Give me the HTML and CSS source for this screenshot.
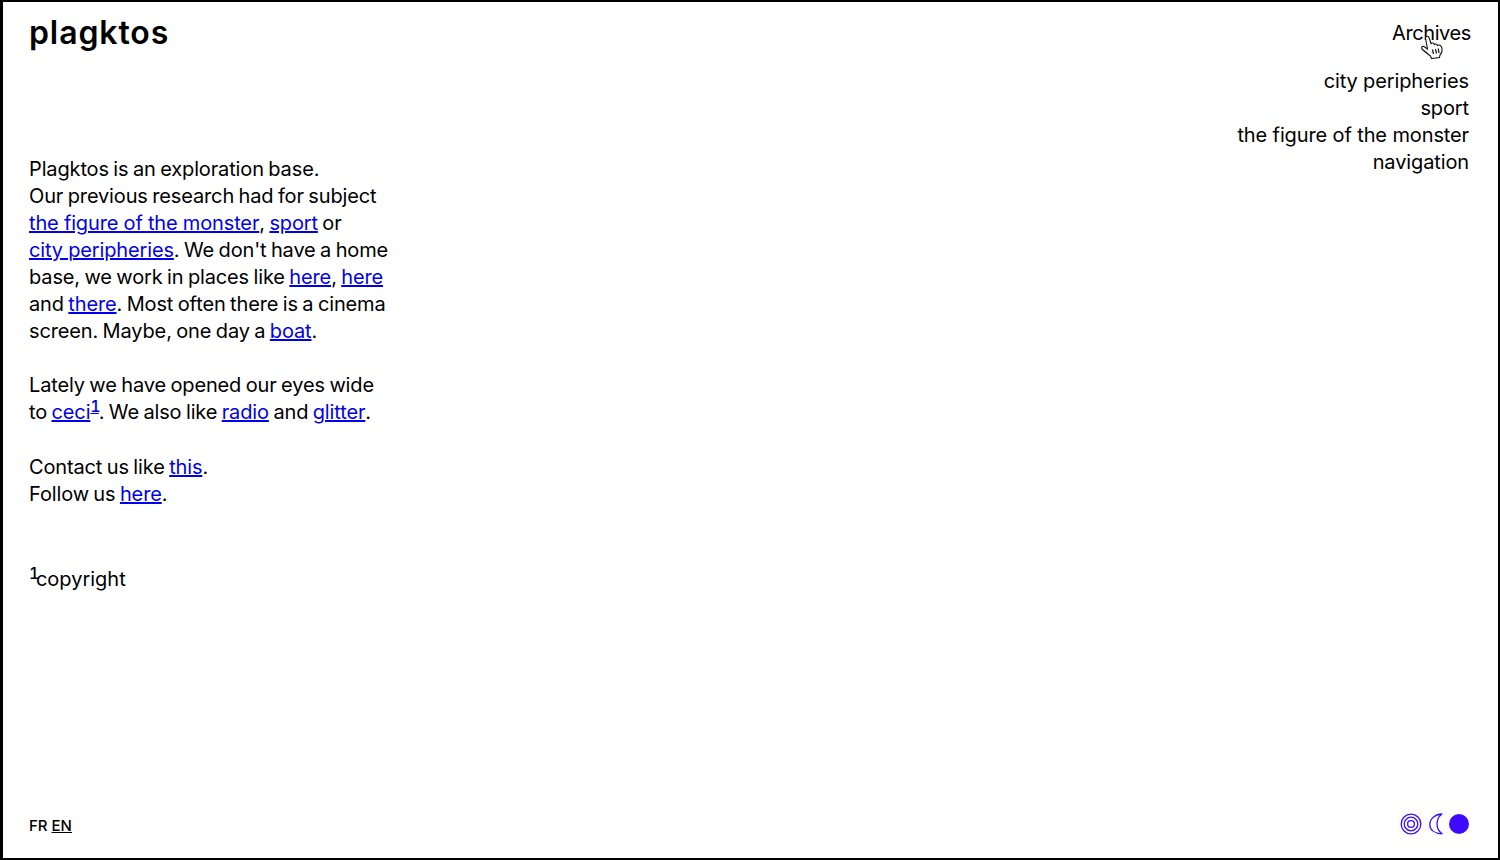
FILE: index.html
```html
<!DOCTYPE html>
<html lang="en">
<head>
<meta charset="utf-8">
<title>plagktos</title>
<link rel="stylesheet" href="styles.css">
</head>
<body>
<div class="frame">
  <header class="top">
    <h1 class="logo">plagktos</h1>
    <nav class="archives">
      <div class="archives-title">Archives<svg class="cursor" viewBox="0 0 22 24" width="22" height="24"><path d="M4.500 3C4.500 1 7.500.5 8 2.500L10 8.500C11 7.500 13 8 13.300 9.500C14.500 8.500 16 9 16.400 10.500C17.800 9.600 20 10 20.500 12C21.500 15 21 18 19 20L18.500 22.500L10.500 23.500L9.500 21C7 19 3 16 1 14C0 12.500 1 11 3 11.500L6.500 14Z" fill="#fff" stroke="#111" stroke-width="1.100"/><path d="M11.500 14.500l1 4.500M14.500 14l1 4.500M17.300 13.500l.7 4.500" stroke="#111" stroke-width="1.200" fill="none"/></svg></div>
      <ul class="archives-list">
        <li>city peripheries</li>
        <li>sport</li>
        <li>the figure of the monster</li>
        <li>navigation</li>
      </ul>
    </nav>
  </header>
  <main class="intro">
    <p>Plagktos is an exploration base.<br>
    Our previous research had for subject<br>
    <a href="#">the figure of the monster</a>, <a href="#">sport</a> or<br>
    <a href="#">city peripheries</a>. We don't have a home<br>
    base, we work in places like <a href="#">here</a>, <a href="#">here</a><br>
    and <a href="#">there</a>. Most often there is a cinema<br>
    screen. Maybe, one day a <a href="#">boat</a>.</p>
    <p class="with-note">Lately we have opened our eyes wide<br>
    to <a href="#">ceci</a><sup class="note"><a href="#">1</a></sup>. We also like <a href="#">radio</a> and <a href="#">glitter</a>.</p>
    <p>Contact us like <a href="#">this</a>.<br>
    Follow us <a href="#">here</a>.</p>
    <p class="footnote"><sup class="note">1</sup>copyright</p>
  </main>
  <footer class="bottom">
    <div class="lang">FR <span class="current">EN</span></div>
    <div class="themes">
      <svg viewBox="0 0 22 22" width="22" height="22"><g fill="none" stroke="#3d0cff" stroke-width="1.300"><circle cx="11" cy="11" r="9.800"/><circle cx="11" cy="11" r="6.800"/><circle cx="11" cy="11" r="3.400"/></g></svg>
      <svg class="moon" viewBox="0 0 16 22" width="16" height="22"><path d="M12.800 1C5.500 1.500.8 6 .8 11.500C.8 17 5.500 20.500 13 20.800C10 18.500 8 15.500 8 11C8 7 9.800 3.500 12.800 1Z" fill="none" stroke="#3d0cff" stroke-width="1.300" stroke-linejoin="round"/></svg>
      <span class="dot"></span>
    </div>
  </footer>
</div>
</body>
</html>
```
FILE: styles.css
```css
* { box-sizing: border-box; }
html, body { margin: 0; height: 100%; background: #fff; }
body { font-family: "Inter", "Liberation Sans", sans-serif; color: #000; overflow: hidden; }
.frame {
  height: 860px;
  border: 2px solid #000;
  border-left-width: 3px;
  padding: 0 29px 0 26px;
  display: flex;
  flex-direction: column;
  font-size: 20px;
  line-height: 27px;
  font-weight: 440;
  letter-spacing: -0.14px;
  word-spacing: -1px;
}
.top { display: flex; justify-content: space-between; align-items: flex-start; }
.logo { margin: 11px 0 0; font-size: 32px; line-height: 40px; font-weight: 600; letter-spacing: 0.9px; word-spacing: 0; }
.archives { text-align: right; margin-top: 18px; }
.archives-title { position: relative; margin-right: -2px; letter-spacing: -0.4px; }
.cursor { position: absolute; right: 28px; top: 15px; }
.archives-list { list-style: none; margin: 21px 0 0; padding: 0; letter-spacing: -0.12px; word-spacing: 0; }
.intro { margin-top: -20px; flex: 1; }
.intro p { margin: 0 0 27px; width: 420px; }
.intro .with-note { margin-bottom: 28px; }
.intro a { color: #0000ee; text-decoration: underline; word-spacing: -0.2px; }
.note { font-size: 16px; line-height: 0; vertical-align: 7px; font-weight: 500; font-feature-settings: "tnum"; letter-spacing: -2px; }
.intro .footnote { margin-top: 58px; letter-spacing: 0; }
.footnote .note { letter-spacing: -3.5px; }
.bottom { display: flex; justify-content: space-between; align-items: center; height: 40px; margin-bottom: 13px; }
.lang { font-size: 15px; font-weight: 500; letter-spacing: 0; word-spacing: 0; }
.current { text-decoration: underline; }
.themes { display: flex; align-items: center; gap: 4px; margin-bottom: 2px; }
.moon { margin-left: 3px; }
.dot { width: 20px; height: 20px; border-radius: 50%; background: #3d0cff; }
```
